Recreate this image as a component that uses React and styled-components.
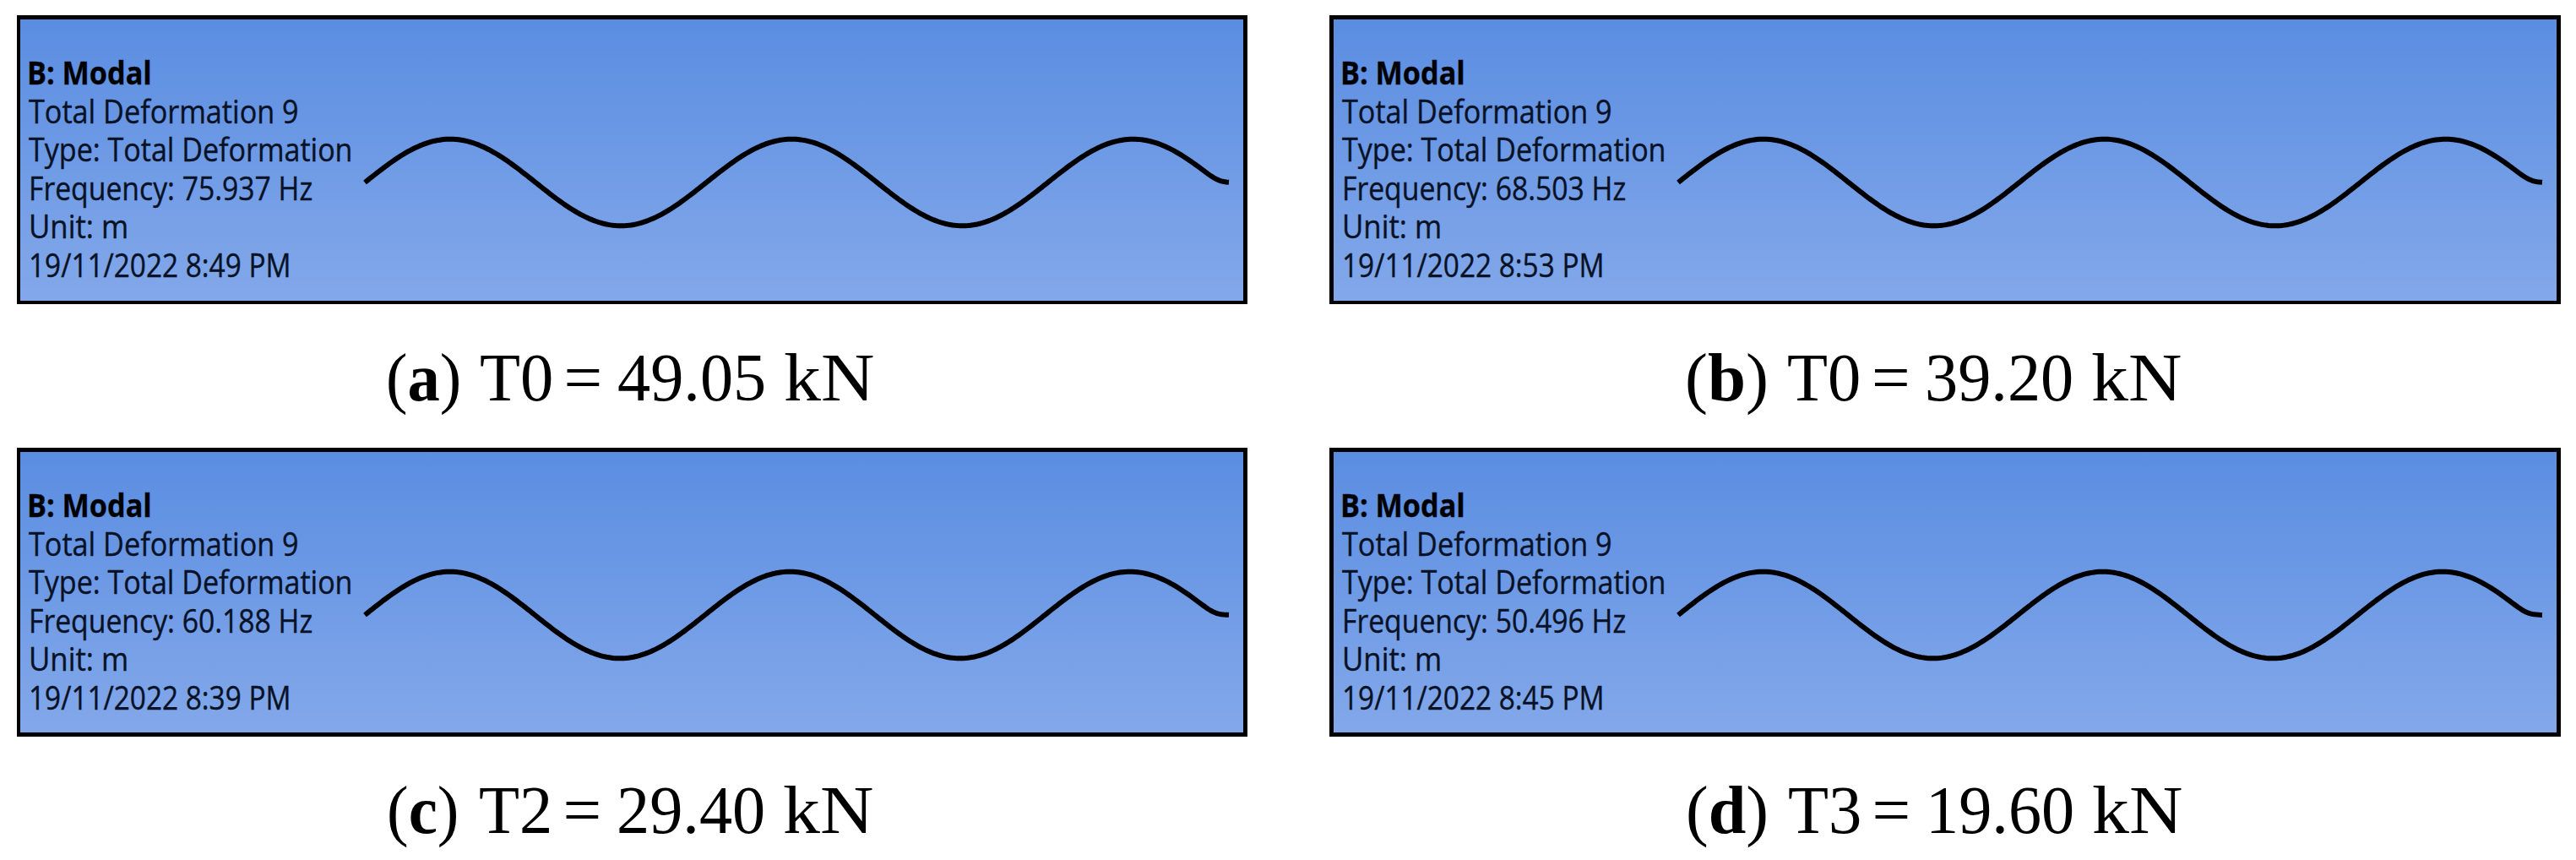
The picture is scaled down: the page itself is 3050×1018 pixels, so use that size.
import styled, { createGlobalStyle } from 'styled-components'

const results = [
    {
        id: 'a', frequency: '75.937', time: '8:49', symbol: 'T0', force: '49.05',
        period: 404.3, border: '5px 5px 4px 4px', offset: 437, tagWidth: 110.5, tagScale: 0.945
    },
    {
        id: 'b', frequency: '68.503', time: '8:53', symbol: 'T0', force: '39.20',
        period: 403.8, border: '5px 5px 4px 5px', offset: 421, tagWidth: 121, tagScale: 1
    },
    {
        id: 'c', frequency: '60.188', time: '8:39', symbol: 'T2', force: '29.40',
        period: 402.6, border: '5px 5px 5px 4px', offset: 438, tagWidth: 108.5, tagScale: 0.95
    },
    {
        id: 'd', frequency: '50.496', time: '8:45', symbol: 'T3', force: '19.60',
        period: 402.2, border: '5px', offset: 422, tagWidth: 120.5, tagScale: 0.99
    }
]

const START = 412
const END = 1437
const AXIS = 198
const AMPLITUDE = 51.3

function wavePath(period) {
    const lastPeak = START + period * 2.25
    const points = []

    for (let x = START; x <= END; x += 3) {
        let h = AMPLITUDE * Math.sin((x - START) / period * Math.PI * 2)
        // the fixed end levels off on the axis instead of crossing it
        if (x > lastPeak) {
            h = 4 * Math.log(1 + Math.exp(h / 4))
        }
        points.push(`${x} ${(AXIS - h).toFixed(2)}`)
    }

    return 'M' + points.join('L')
}

function Result({ data }) {
    return (
        <Figure>
            <Viewport $border={data.border}>
                <Info>
                    <Title>B: Modal</Title>
                    <Line $fit={0.9}>Total Deformation 9</Line>
                    <Line $fit={0.896}>Type: Total Deformation</Line>
                    <Line $fit={0.887}>Frequency: {data.frequency} Hz</Line>
                    <Line $fit={0.915}>Unit: m</Line>
                    <Line $fit={0.878}>19/11/2022 {data.time} PM</Line>
                </Info>
                <Wave viewBox="405 5 1043 332">
                    <path d={wavePath(data.period)} />
                </Wave>
            </Viewport>

            <Caption $offset={data.offset} $tag={data.tagWidth}>
                <Part $fit={data.tagScale}>(<b>{data.id}</b>)</Part>
                <Part $fit={0.97}>{data.symbol}</Part>
                <Part $fit={1}>=</Part>
                <Part $fit={0.967}>{data.force}</Part>
                <Part $fit={1.085}>kN</Part>
            </Caption>
        </Figure>
    )
}

function App() {
    return (
        <>
            <GlobalStyle />
            <Page>
                {results.map(item => <Result key={item.id} data={item} />)}
            </Page>
        </>
    )
}

export default App

const GlobalStyle = createGlobalStyle`
    * {
        box-sizing: border-box;
    }

    body {
        margin: 0;
        background-color: white;
        color: black;
    }
`

const Page = styled.main`
    display: grid;
    grid-template-columns: 1457px 1458px;
    grid-template-rows: 512px 488px;
    column-gap: 97px;
    width: 3050px;
    height: 1018px;
    padding: 18px 0 0 20px;
    overflow: hidden;
`

const Figure = styled.figure`
    display: flex;
    flex-direction: column;
    margin: 0;
`

const Viewport = styled.div`
    display: flex;
    height: 342px;
    border: solid black;
    border-width: ${props => props.$border};
    background: linear-gradient(rgb(90,141,225), rgb(131,168,234));
`

const Info = styled.div`
    flex: 0 0 401px;
    width: 401px;
    min-width: 0;
    padding: 40px 0 0 10px;
    font-family: "Open Sans", sans-serif;
    font-size: 38px;
    line-height: 45.5px;
    color: rgb(8,18,38);
    -webkit-text-stroke: 0.4px rgb(8,18,38);
`

const Line = styled.div`
    white-space: nowrap;
    transform: scaleX(${props => props.$fit});
    transform-origin: left;
    width: 430px;
`

const Title = styled(Line).attrs({ $fit: 0.9 })`
    margin-left: -2px;
    font-weight: bold;
    color: black;
`

const Wave = styled.svg`
    flex: 0 0 1043px;
    height: 332px;

    path {
        fill: none;
        stroke: black;
        stroke-width: 6;
        stroke-linejoin: round;
    }
`

const Caption = styled.figcaption`
    display: grid;
    grid-template-columns: ${props => props.$tag}px 100px 63px 197px 110px;
    margin-top: 42px;
    padding-left: ${props => props.$offset}px;
    font-family: "Liberation Serif", serif;
    font-size: 81px;
    line-height: 90px;
`

const Part = styled.span`
    white-space: nowrap;
    transform: scaleX(${props => props.$fit});
    transform-origin: left;
`
